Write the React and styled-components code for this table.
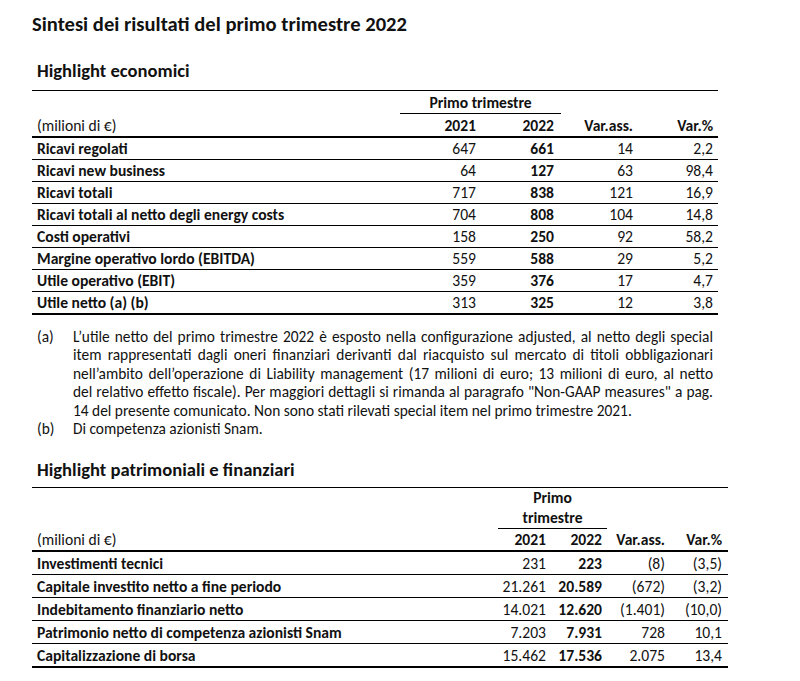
import React from 'react';
import styled, { createGlobalStyle } from 'styled-components';

const GlobalStyle = createGlobalStyle`
  html, body {
    margin: 0;
    padding: 0;
    background: #ffffff;
  }
  body {
    font-family: "Carlito", "Calibri", "Open Sans", sans-serif;
    color: #111111;
  }
`;

const Page = styled.div`
  width: 800px;
  padding: 10px 0 0 32px;
  box-sizing: border-box;
`;

const Title = styled.h1`
  font-size: 20.6px;
  font-weight: 700;
  margin: 0 0 22px 0;
  line-height: 28px;
`;

const SectionTitle = styled.h2`
  font-size: 18.6px;
  font-weight: 700;
  margin: 0;
  padding: 0 0 ${(p) => p.$gap}px 5px;
  line-height: 22px;
  width: ${(p) => p.$width}px;
  border-bottom: 1px solid #000;
`;

const Table = styled.table`
  border-collapse: collapse;
  table-layout: fixed;
  width: ${(p) => p.$width}px;
  font-size: 15.6px;
  line-height: 18px;
`;

const Col = styled.col`
  width: ${(p) => p.$w}px;
`;

const GroupCell = styled.th`
  font-weight: 700;
  text-align: center;
  vertical-align: bottom;
  padding: 0;
  height: ${(p) => p.$h}px;
  line-height: 20px;
  border-bottom: 1px solid #000;
`;

const Blank = styled.th`
  padding: 0;
`;

const HeadRow = styled.tr`
  border-bottom: 2px solid #000;
`;

const HeadLabel = styled.th`
  text-align: left;
  font-weight: 400;
  height: ${(p) => p.$h}px;
  padding: 2px 0 0 5px;
  vertical-align: middle;
`;

const HeadNum = styled.th`
  text-align: right;
  font-weight: 700;
  padding: 2px ${(p) => p.$pr}px 0 0;
  white-space: nowrap;
`;

const Row = styled.tr`
  border-bottom: ${(p) => (p.$last ? 2 : 1)}px solid #000;
`;

const Label = styled.td`
  font-weight: 700;
  text-align: left;
  padding: 1px 0 0 5px;
  height: ${(p) => p.$h - 1}px;
  white-space: nowrap;
`;

const Num = styled.td`
  text-align: right;
  padding: 1px ${(p) => p.$pr}px 0 0;
  font-weight: ${(p) => (p.$bold ? 700 : 400)};
  white-space: nowrap;
`;

const Notes = styled.div`
  width: 676px;
  padding: 13px 0 0 5px;
  margin-bottom: 20px;
  font-size: 15.4px;
  line-height: 18.5px;
`;

const Note = styled.div`
  display: flex;
`;

const NoteKey = styled.span`
  flex: 0 0 36px;
`;

const NoteText = styled.div`
  flex: 1;
  min-width: 0;
`;

const NoteLine = styled.span`
  display: block;
  white-space: nowrap;
  text-align: justify;
  text-align-last: ${(p) => (p.$last ? 'left' : 'justify')};
`;

const economic = [
  ['Ricavi regolati', '647', '661', '14', '2,2'],
  ['Ricavi new business', '64', '127', '63', '98,4'],
  ['Ricavi totali', '717', '838', '121', '16,9'],
  ['Ricavi totali al netto degli energy costs', '704', '808', '104', '14,8'],
  ['Costi operativi', '158', '250', '92', '58,2'],
  ['Margine operativo lordo (EBITDA)', '559', '588', '29', '5,2'],
  ['Utile operativo (EBIT)', '359', '376', '17', '4,7'],
  ['Utile netto (a) (b)', '313', '325', '12', '3,8'],
];

const financial = [
  ['Investimenti tecnici', '231', '223', '(8)', '(3,5)'],
  ['Capitale investito netto a fine periodo', '21.261', '20.589', '(672)', '(3,2)'],
  ['Indebitamento finanziario netto', '14.021', '12.620', '(1.401)', '(10,0)'],
  ['Patrimonio netto di competenza azionisti Snam', '7.203', '7.931', '728', '10,1'],
  ['Capitalizzazione di borsa', '15.462', '17.536', '2.075', '13,4'],
];

const noteA = [
  'L’utile netto del primo trimestre 2022 è esposto nella configurazione adjusted, al netto degli special',
  'item rappresentati dagli oneri finanziari derivanti dal riacquisto sul mercato di titoli obbligazionari',
  'nell’ambito dell’operazione di Liability management (17 milioni di euro; 13 milioni di euro, al netto',
  'del relativo effetto fiscale). Per maggiori dettagli si rimanda al paragrafo "Non-GAAP measures" a pag.',
  '14 del presente comunicato. Non sono stati rilevati special item nel primo trimestre 2021.',
];

function DataTable({ width, cols, pads, rows, groupLabel, groupH, headH, rowH }) {
  return (
    <Table $width={width}>
      <colgroup>
        {cols.map((w, i) => (
          <Col key={i} $w={w} />
        ))}
      </colgroup>
      <thead>
        <tr>
          <Blank />
          <GroupCell colSpan={2} $h={groupH}>
            {groupLabel}
          </GroupCell>
          <Blank />
          <Blank />
        </tr>
        <HeadRow>
          <HeadLabel $h={headH}>(milioni di €)</HeadLabel>
          <HeadNum $pr={pads[0]}>2021</HeadNum>
          <HeadNum $pr={pads[1]}>2022</HeadNum>
          <HeadNum $pr={pads[2]}>Var.ass.</HeadNum>
          <HeadNum $pr={pads[3]}>Var.%</HeadNum>
        </HeadRow>
      </thead>
      <tbody>
        {rows.map((r, i) => (
          <Row key={r[0]} $last={i === rows.length - 1}>
            <Label $h={rowH}>{r[0]}</Label>
            <Num $pr={pads[0]}>{r[1]}</Num>
            <Num $pr={pads[1]} $bold>
              {r[2]}
            </Num>
            <Num $pr={pads[2]}>{r[3]}</Num>
            <Num $pr={pads[3]}>{r[4]}</Num>
          </Row>
        ))}
      </tbody>
    </Table>
  );
}

export default function App() {
  return (
    <Page>
      <GlobalStyle />
      <Title>Sintesi dei risultati del primo trimestre 2022</Title>

      <SectionTitle $width={681} $gap={8}>
        Highlight economici
      </SectionTitle>
      <DataTable
        width={686}
        cols={[368, 81, 80, 77, 80]}
        pads={[5, 7, 5, 5]}
        rows={economic}
        groupLabel="Primo trimestre"
        groupH={22}
        headH={20}
        rowH={21}
      />

      <Notes>
        <Note>
          <NoteKey>(a)</NoteKey>
          <NoteText>
            {noteA.map((line, i) => (
              <NoteLine key={i} $last={i === noteA.length - 1}>
                {line}
              </NoteLine>
            ))}
          </NoteText>
        </Note>
        <Note>
          <NoteKey>(b)</NoteKey>
          <NoteText>
            <NoteLine $last>Di competenza azionisti Snam.</NoteLine>
          </NoteText>
        </Note>
      </Notes>

      <SectionTitle $width={691} $gap={6}>
        Highlight patrimoniali e finanziari
      </SectionTitle>
      <DataTable
        width={696}
        cols={[466, 53, 56, 63, 58]}
        pads={[5, 5, 5, 6]}
        rows={financial}
        groupLabel={
          <>
            Primo
            <br />
            trimestre
          </>
        }
        groupH={39}
        headH={20}
        rowH={22}
      />
    </Page>
  );
}
